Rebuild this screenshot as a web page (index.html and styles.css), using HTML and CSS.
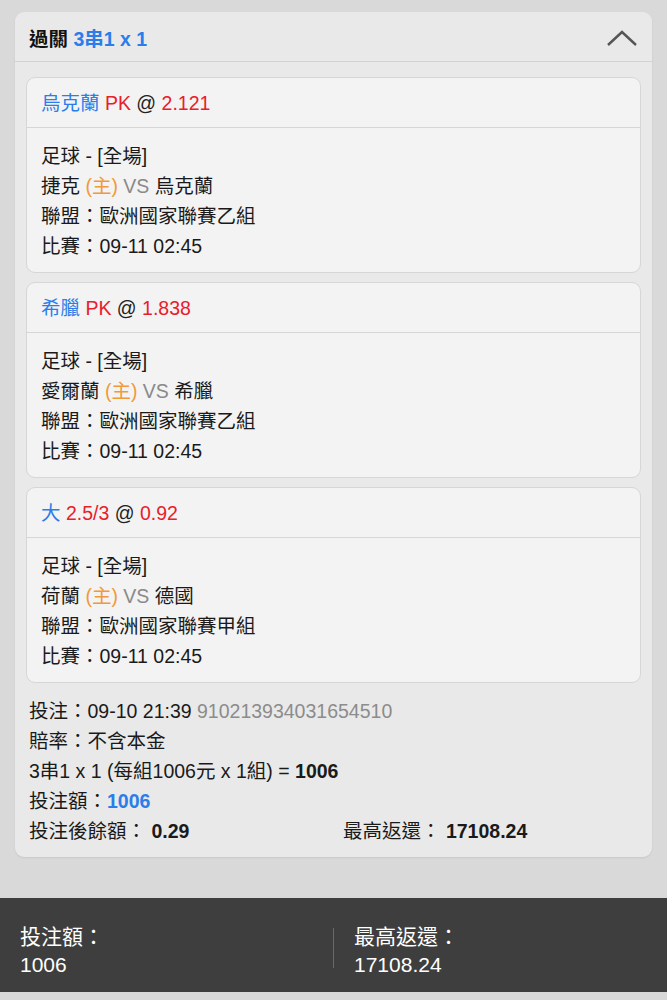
FILE: index.html
```html
<!DOCTYPE html>
<html lang="zh-Hant">
<head>
  <meta charset="UTF-8">
  <meta name="viewport" content="width=device-width, initial-scale=1.0">
  <title>過關注單</title>
  <link rel="stylesheet" href="styles.css">
</head>
<body>
  <div class="slip">
    <div class="slip-head">
      <div class="slip-title">過關 <span class="blue">3串1 x 1</span></div>
      <svg class="chevron" width="32" height="18" viewBox="0 0 32 18">
        <polyline points="2,16 16,3 30,16" fill="none" stroke="#555" stroke-width="2.4"/>
      </svg>
    </div>

    <div class="slip-body">
      <div class="leg">
        <div class="leg-head"><span class="blue">烏克蘭</span> <span class="red">PK</span> @ <span class="red">2.121</span></div>
        <div class="leg-info">
          <div>足球 - [全場]</div>
          <div>捷克 <span class="home">(主)</span> <span class="vs">VS</span> 烏克蘭</div>
          <div>聯盟：歐洲國家聯賽乙組</div>
          <div>比賽：09-11 02:45</div>
        </div>
      </div>

      <div class="leg">
        <div class="leg-head"><span class="blue">希臘</span> <span class="red">PK</span> @ <span class="red">1.838</span></div>
        <div class="leg-info">
          <div>足球 - [全場]</div>
          <div>愛爾蘭 <span class="home">(主)</span> <span class="vs">VS</span> 希臘</div>
          <div>聯盟：歐洲國家聯賽乙組</div>
          <div>比賽：09-11 02:45</div>
        </div>
      </div>

      <div class="leg">
        <div class="leg-head"><span class="blue">大</span> <span class="red">2.5/3</span> @ <span class="red">0.92</span></div>
        <div class="leg-info">
          <div>足球 - [全場]</div>
          <div>荷蘭 <span class="home">(主)</span> <span class="vs">VS</span> 德國</div>
          <div>聯盟：歐洲國家聯賽甲組</div>
          <div>比賽：09-11 02:45</div>
        </div>
      </div>

      <div class="summary">
        <div>投注：09-10 21:39 <span class="muted">910213934031654510</span></div>
        <div>賠率：不含本金</div>
        <div>3串1 x 1 (每組1006元 x 1組) = <b>1006</b></div>
        <div>投注額：<b class="blue">1006</b></div>
        <div class="summary-row">
          <div>投注後餘額： <b>0.29</b></div>
          <div>最高返還： <b>17108.24</b></div>
        </div>
      </div>
    </div>
  </div>

  <div class="footer">
    <div class="footer-col">
      <div>投注額：</div>
      <div>1006</div>
    </div>
    <div class="footer-sep"></div>
    <div class="footer-col">
      <div>最高返還：</div>
      <div>17108.24</div>
    </div>
  </div>
</body>
</html>
```

FILE: styles.css
```css
body {
  margin: 0;
  background-color: #d9d9d9;
  font-family: "Liberation Sans", "Noto Sans CJK TC", sans-serif;
  color: #1a1a1a;
  font-size: 19.5px;
}
.blue {
  color: #2b7de9;
}
.red {
  color: #e8202a;
}
.home {
  color: #f09a3a;
}
.vs {
  color: #8a8a8a;
}
.muted {
  color: #8c8c8c;
}
b {
  font-weight: bold;
}

.slip {
  margin: 12px 15px 0 15px;
  background-color: #e9e9e9;
  border-radius: 9px;
  box-shadow: 0 1px 2px rgba(0, 0, 0, 0.08);
}
.slip-head {
  height: 49px;
  display: flex;
  align-items: center;
  justify-content: space-between;
  padding: 0 14px 0 14px;
  border-bottom: 1px solid #d3d3d3;
}
.slip-title {
  font-weight: bold;
  font-size: 19.5px;
  color: #111;
  padding-top: 2px;
}
.chevron {
  margin-top: 2px;
}
.slip-body {
  padding: 15px 11px 11px 11px;
}

.leg {
  background-color: #f3f3f3;
  border: 1px solid #d6d6d6;
  border-radius: 9px;
  margin-bottom: 9px;
}
.leg-head {
  height: 49px;
  line-height: 50px;
  padding: 0 14px;
  border-bottom: 1px solid #d6d6d6;
  color: #222;
}
.leg-info {
  padding: 13px 14px 11px 14px;
  line-height: 30px;
  color: #1a1a1a;
}

.summary {
  padding: 4px 3px 0 3px;
  line-height: 30px;
}
.summary-row {
  display: grid;
  grid-template-columns: 314px 1fr;
}

.footer {
  margin-top: 41px;
  height: 94px;
  box-sizing: border-box;
  padding-top: 25px;
  background-color: #3e3e3e;
  display: flex;
  align-items: flex-start;
  color: #fff;
  font-size: 21px;
  line-height: 28px;
}
.footer-col {
  flex: 1;
  padding: 0 20px;
}
.footer-sep {
  width: 1px;
  height: 40px;
  margin-top: 5px;
  background-color: #6a6a6a;
}
```
